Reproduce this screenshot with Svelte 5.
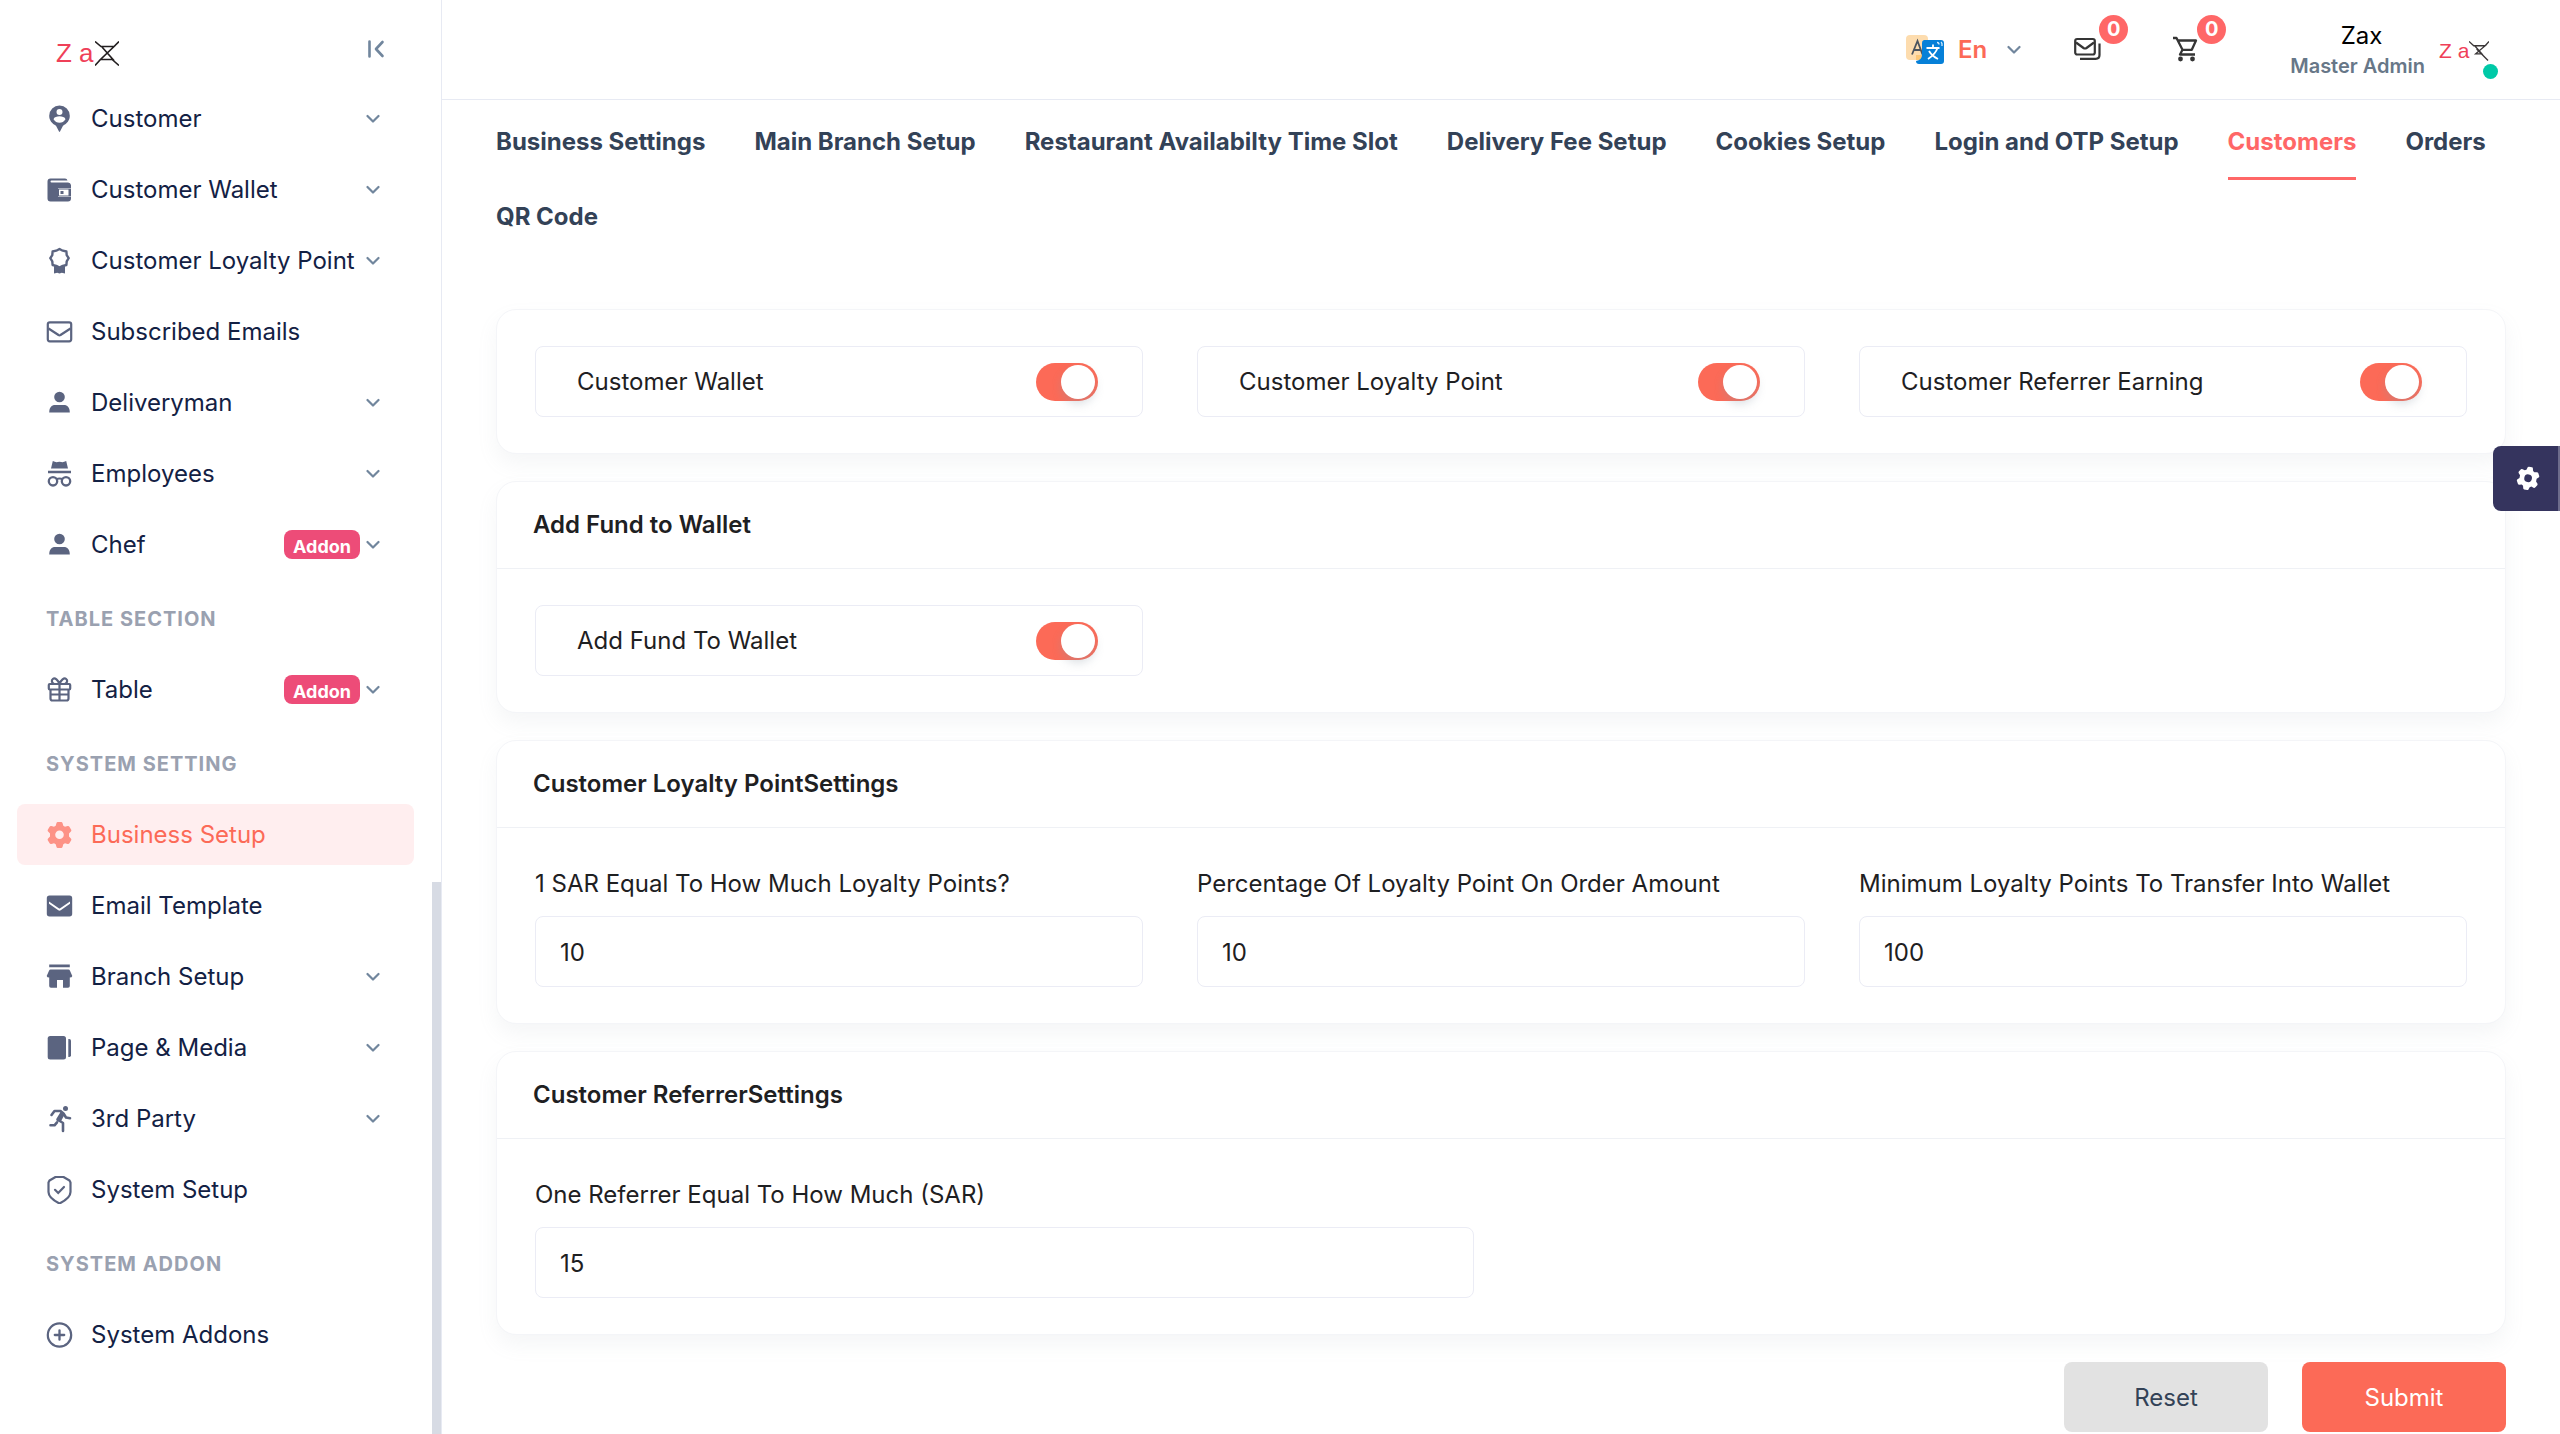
<script>
  const icons = {
    pin: '<path fill-rule="evenodd" d="M13.500 0.500a10.300 10.300 0 0 1 10.300 10.300c0 4.500-2.800 8-6.800 9.900l-3 5.800q-.5 .9-1 0l-3-5.800c-4-1.900-6.800-5.400-6.800-9.900a10.300 10.300 0 0 1 10.300-10.300zM13.500 4a3 3 0 1 0 0 6 3 3 0 0 0 0-6zM7.500 14.200c1.500 2.400 3.500 3.500 6 3.500s4.500-1.100 6-3.500c-.5-2-3.500-2.900-6-2.900s-5.500 .9-6 2.900z"/>',
    wallet: '<path d="M4.500 2.500H19a2.500 2.500 0 0 1 2.500 2H5.500a1 1 0 0 0 0 2H22a3 3 0 0 1 3 2.500v3h-13v9h13v1.500a3 3 0 0 1-3 3H4.500a3 3 0 0 1-3-3v-17a3 3 0 0 1 3-3z"/><path fill-rule="evenodd" d="M12 12.500h13v8H12zM13 13.500v6h9.500v-6z"/><rect x="14.500" y="15" width="3" height="3"/>',
    ribbon: '<path fill="none" stroke="currentColor" stroke-width="2.400" stroke-linejoin="round" d="M13.500 2l3.300 1.700 3.600.8.300 3.700 2 3-2 3.100-.3 3.700-3.600.8-3.300 1.700-3.300-1.700-3.600-.8-.3-3.700-2-3.100 2-3 .3-3.700 3.600-.8z"/><path d="M8 18.500l5.500 2.200 5.500-2.200v8l-3.200-.8-2.300.8-2.300-.8-3.200.8z"/>',
    mail: '<rect x="1.800" y="4.300" width="23.400" height="19" rx="2" fill="none" stroke="currentColor" stroke-width="2.200"/><path fill="none" stroke="currentColor" stroke-width="2.200" d="M2.500 10.500l10 6.500q1 .6 2 0l10-6.500"/>',
    person: '<circle cx="13.500" cy="8" r="5.300"/><path d="M3.200 23.500c0-5 2.300-7.500 6-7.500h8.600c3.700 0 6 2.500 6 7.500z"/>',
    incognito: '<path d="M5 8.500L6.800 1q3 1.600 5 1 1.700-.6 3.400 0 2 .6 5-1L22 8.500zM2 10.800h23v2.400H2z"/><circle cx="7" cy="21.300" r="4.200" fill="none" stroke="currentColor" stroke-width="2.300"/><circle cx="20" cy="21.300" r="4.200" fill="none" stroke="currentColor" stroke-width="2.300"/><path fill="none" stroke="currentColor" stroke-width="2" d="M10 19.300q3.500-1.500 7 0"/>',
    gift: '<g fill="none" stroke="currentColor" stroke-width="2.200" stroke-linejoin="round"><rect x="2.800" y="8" width="21.400" height="5.500" rx="1"/><path d="M4.500 13.500v9q0 2 2 2h14q2 0 2-2v-9M13.500 8v16.500M5 18.500h17"/><path d="M13.500 8C12 4 9 1.500 7 2.800 4.800 4.300 6 7 8 8M13.500 8C15 4 18 1.500 20 2.800 22.200 4.300 21 7 19 8"/></g>',
    gear: '<path fill-rule="evenodd" d="M11.800 1h3.400q1 0 1.300 1l.8 2.800 1.700 1 2.600-.7q1.200-.3 1.800.6l1.800 3q.5 1-.3 1.800L23 12.500v3l1.900 2q.8.800.3 1.800l-1.800 3q-.6.900-1.800.6l-2.600-.7-1.700 1-.8 2.800q-.3 1-1.300 1h-3.400q-1 0-1.300-1l-.8-2.800-1.700-1-2.600.7q-1.200.3-1.800-.6l-1.800-3q-.5-1 .3-1.800l1.900-2v-3l-1.900-2q-.8-.8-.3-1.800l1.800-3q.6-.9 1.800-.6l2.600.7 1.700-1 .8-2.800q.3-1 1.300-1zM13.500 9.500a4.300 4.300 0 1 0 0 8.600 4.300 4.300 0 0 0 0-8.600z"/>',
    mailFill: '<path fill-rule="evenodd" d="M3.500 3.500h20a2.700 2.700 0 0 1 2.700 2.700v15.600a2.700 2.700 0 0 1-2.700 2.700h-20a2.700 2.700 0 0 1-2.700-2.700V6.200a2.700 2.700 0 0 1 2.700-2.700zM3 9.500v2.300l9.300 6.500q1.200.7 2.400 0l9.300-6.500V9.500l-9.800 6.700q-.7.400-1.400 0z"/>',
    store: '<path d="M3.200 1.500h20.600v2.800H3.200zM4.500 6.500h18q1 0 1.500 1.200l2.300 5.300q-.3 1.500-2.500 1.600V23q0 1.800-1.800 1.800h-5V17H11v7.800H5q-1.800 0-1.800-1.800v-8.400Q1 14.500.7 13L3 7.700Q3.500 6.500 4.500 6.500z"/>',
    page: '<rect x="1.700" y="2" width="18.300" height="23.500" rx="2.500"/><path d="M22.300 5h1a1.700 1.700 0 0 1 1.700 1.700v14.500a1.700 1.700 0 0 1-1.700 1.700h-1z"/>',
    runner: '<circle cx="19.500" cy="3.500" r="2.500"/><path d="M10 5.500l6 .8-5.500 9.500 4 1.200 4.500-8z"/><g fill="none" stroke="currentColor" stroke-width="2.600" stroke-linecap="round" stroke-linejoin="round"><path d="M5.500 10l3-4h6l3 2.500 2.500 4 4 .8M15.500 8l-4 6.500 5.500 3.500v8M4.500 20.300h4l2.500-3"/></g>',
    shield: '<path fill="none" stroke="currentColor" stroke-width="2.200" stroke-linejoin="round" d="M9.500 1h8l6 3.500 1 2v9.500c0 4-3 7.500-11 11.500-8-4-11-7.500-11-11.500V6.500l1-2z"/><path fill="none" stroke="currentColor" stroke-width="2.200" stroke-linecap="round" d="M9 13.800l3.200 3.200 5.800-6"/>',
    plus: '<circle cx="13.500" cy="14" r="11.700" fill="none" stroke="currentColor" stroke-width="2.200"/><path fill="none" stroke="currentColor" stroke-width="2.300" stroke-linecap="round" d="M13.500 9.300v9.400M8.800 14h9.400"/>'
  };

  const sections = [
    {
      title: '',
      items: [
        { label: 'Customer', icon: 'pin', more: true },
        { label: 'Customer Wallet', icon: 'wallet', more: true },
        { label: 'Customer Loyalty Point', icon: 'ribbon', more: true },
        { label: 'Subscribed Emails', icon: 'mail' },
        { label: 'Deliveryman', icon: 'person', more: true },
        { label: 'Employees', icon: 'incognito', more: true },
        { label: 'Chef', icon: 'person', more: true, addon: true }
      ]
    },
    { title: 'TABLE SECTION', items: [{ label: 'Table', icon: 'gift', more: true, addon: true }] },
    {
      title: 'SYSTEM SETTING',
      items: [
        { label: 'Business Setup', icon: 'gear', active: true },
        { label: 'Email Template', icon: 'mailFill' },
        { label: 'Branch Setup', icon: 'store', more: true },
        { label: 'Page & Media', icon: 'page', more: true },
        { label: '3rd Party', icon: 'runner', more: true },
        { label: 'System Setup', icon: 'shield' }
      ]
    },
    { title: 'SYSTEM ADDON', items: [{ label: 'System Addons', icon: 'plus' }] }
  ];

  const tabs = [
    'Business Settings',
    'Main Branch Setup',
    'Restaurant Availabilty Time Slot',
    'Delivery Fee Setup',
    'Cookies Setup',
    'Login and OTP Setup',
    'Customers',
    'Orders',
    'QR Code'
  ];
  const currentTab = 'Customers';

  let features = $state([
    { label: 'Customer Wallet', on: true },
    { label: 'Customer Loyalty Point', on: true },
    { label: 'Customer Referrer Earning', on: true }
  ]);
  let addFund = $state(true);

  let loyalty = $state([
    { id: 'sar-points', label: '1 SAR Equal To How Much Loyalty Points?', value: '10' },
    { id: 'order-percent', label: 'Percentage Of Loyalty Point On Order Amount', value: '10' },
    { id: 'min-points', label: 'Minimum Loyalty Points To Transfer Into Wallet', value: '100' }
  ]);
  let referrer = $state('15');
</script>

{#snippet chevron()}
  <svg class="chevron" viewBox="0 0 14 14" aria-hidden="true">
    <path d="M1.500 4l5.500 5.500L12.500 4" fill="none" stroke="currentColor" stroke-width="2.200" stroke-linecap="round" stroke-linejoin="round" />
  </svg>
{/snippet}

{#snippet mark()}
  <svg class="mark" viewBox="0 0 24 25" aria-hidden="true">
    <g fill="none" stroke="#231f20" stroke-width="1.600">
      <path d="M0 .5l6 5h13L5.500 18.500H18L7 6M5.500 18.500L0 24.500M19 5.500L24 .5M16 17.500L24 24.500" />
    </g>
  </svg>
{/snippet}

<div class="app">
  <aside class="sidebar">
    <div class="brand">
      <a class="logo" href="#home"><span>Z a</span>{@render mark()}</a>
      <button class="collapse" type="button" aria-label="Collapse menu">
        <svg viewBox="0 0 18 18" aria-hidden="true">
          <path d="M2.500 1.500v15M15.500 2L9 9l6.500 7" fill="none" stroke="currentColor" stroke-width="2.600" stroke-linecap="round" stroke-linejoin="round" />
        </svg>
      </button>
    </div>
    <nav class="menu" aria-label="Main">
      {#each sections as section}
        {#if section.title}
          <h2 class="heading">{section.title}</h2>
        {/if}
        {#each section.items as item}
          <a class="item" class:active={item.active} href="#{item.icon}">
            <svg class="icon" viewBox="0 0 28 28" fill="currentColor" aria-hidden="true">{@html icons[item.icon]}</svg>
            <span class="label">{item.label}</span>
            {#if item.addon}<span class="addon">Addon</span>{/if}
            {#if item.more}{@render chevron()}{/if}
          </a>
        {/each}
      {/each}
    </nav>
    <div class="thumb"></div>
  </aside>

  <div class="page">
    <header class="topbar">
      <button class="lang" type="button">
        <svg class="flag" viewBox="0 0 38 30" aria-hidden="true">
          <rect x="0" y="0" width="22" height="25" rx="4" fill="#fddcae" />
          <path d="M10 20h8v5h-8z" fill="#fbc677" />
          <path d="M6 19.500L11.500 6l5 13.500M8 15h7" fill="none" stroke="#4b545f" stroke-width="1.800" />
          <path d="M18 5h17a3 3 0 0 1 3 3v18a3 3 0 0 1-3 3H13a3 3 0 0 1-3-3q6-1 6-6V8a3 3 0 0 1 2-3z" fill="#0680d8" />
          <path d="M20.500 13h13M27 9.500V13M31.500 13q-2 6-9.500 11M23 16q3 5 9 8" fill="none" stroke="#fff" stroke-width="1.800" />
          <path d="M31 7.500q2 0 2 2M35 7q1.500 1 1 4" fill="none" stroke="#d9ecfb" stroke-width="1.300" />
        </svg>
        <span>En</span>
        {@render chevron()}
      </button>
      <a class="alert" href="#messages" aria-label="Messages">
        <svg viewBox="0 0 28 28" aria-hidden="true">
          <g fill="none" stroke="#353535" stroke-width="2.200" stroke-linejoin="round">
            <rect x="2.200" y="4" width="19.600" height="15.500" rx="2" />
            <path d="M3 7.500l7.500 5.500q1.500 1 3 0L21 7.500M26.500 8.500V20q0 3.800-3.800 3.800H7" />
          </g>
        </svg>
        <span class="count">0</span>
      </a>
      <a class="alert" href="#orders" aria-label="Orders">
        <svg viewBox="0 0 28 28" aria-hidden="true">
          <path d="M2 3h3.500l6 11.800h9.300L25 5.500H7M11.500 14.800L9 19.500h15" fill="none" stroke="#353535" stroke-width="2.300" stroke-linejoin="round" />
          <circle cx="9.500" cy="24" r="2.400" fill="#353535" />
          <circle cx="21.500" cy="24" r="2.400" fill="#353535" />
        </svg>
        <span class="count">0</span>
      </a>
      <a class="profile" href="#profile">
        <span class="who">
          <span class="name">Zax</span>
          <span class="role">Master Admin</span>
        </span>
        <span class="avatar"><span>Z a</span>
          <svg class="mark" viewBox="0 0 21 21" aria-hidden="true">
            <path d="M0 .5l5 4.500h12L7 13.500h6.500L6 5M17 5l4-4.500M8 8.500L20 20.500" fill="none" stroke="#3a3637" stroke-width="1.400" />
          </svg>
          <i class="online"></i>
        </span>
      </a>
    </header>

    <main class="content">
      <nav class="tabs" aria-label="Business setup">
        {#each tabs as tab}
          <a href="#tab" class:current={tab === currentTab}>{tab}</a>
        {/each}
      </nav>

      <form class="cards" onsubmit={(e) => e.preventDefault()}>
        <section class="card">
          <div class="body thirds">
            {#each features as feature}
              <label class="switch">
                <span>{feature.label}</span>
                <input type="checkbox" role="switch" bind:checked={feature.on} />
              </label>
            {/each}
          </div>
        </section>

        <section class="card">
          <h3>Add Fund to Wallet</h3>
          <div class="body thirds">
            <label class="switch">
              <span>Add Fund To Wallet</span>
              <input type="checkbox" role="switch" bind:checked={addFund} />
            </label>
          </div>
        </section>

        <section class="card">
          <h3>Customer Loyalty PointSettings</h3>
          <div class="body thirds">
            {#each loyalty as field}
              <div class="field">
                <label for={field.id}>{field.label}</label>
                <input id={field.id} type="text" bind:value={field.value} />
              </div>
            {/each}
          </div>
        </section>

        <section class="card">
          <h3>Customer ReferrerSettings</h3>
          <div class="body halves">
            <div class="field">
              <label for="referrer">One Referrer Equal To How Much (SAR)</label>
              <input id="referrer" type="text" bind:value={referrer} />
            </div>
          </div>
        </section>

        <div class="actions">
          <button class="reset" type="reset">Reset</button>
          <button class="submit" type="submit">Submit</button>
        </div>
      </form>
    </main>
  </div>

  <button class="settings" type="button" aria-label="Layout settings">
    <svg viewBox="0 0 28 28" fill="currentColor" aria-hidden="true">
      <g transform="rotate(12 14 14)">{@html icons.gear}</g>
    </svg>
  </button>
</div>

<style>
  :global(body) {
    background: #fff;
    overflow-x: hidden;
  }
  .app {
    display: flex;
    min-height: 100vh;
    font-family: Inter, "Liberation Sans", sans-serif;
    font-size: 24px;
    line-height: 36px;
    color: #1e2022;
  }
  .app :where(*) {
    box-sizing: border-box;
  }
  a {
    color: inherit;
    text-decoration: none;
  }
  button {
    font: inherit;
    border: 0;
    padding: 0;
    background: none;
    cursor: pointer;
  }
  svg {
    display: block;
    flex: none;
  }

  .sidebar {
    position: sticky;
    top: 0;
    flex: none;
    width: 442px;
    height: 100vh;
    overflow: hidden;
    border-right: 1px solid #e7eaf3;
    background: #fff;
  }
  .brand {
    display: flex;
    justify-content: space-between;
    align-items: center;
    height: 88px;
    padding: 18px 56px 0 56px;
  }
  .logo,
  .avatar {
    display: flex;
    align-items: center;
    font-family: "Liberation Sans", sans-serif;
    color: #ef4058;
  }
  .logo {
    gap: 1px;
    font-size: 26px;
  }
  .logo .mark {
    width: 24px;
    height: 25px;
  }
  .collapse {
    color: #71869d;
    margin-bottom: 8px;
  }
  .collapse svg {
    width: 18px;
    height: 18px;
  }
  .menu {
    display: flex;
    flex-direction: column;
    gap: 10px;
    padding: 0 27px 0 17px;
  }
  .item {
    display: flex;
    align-items: center;
    height: 61px;
    padding: 0 34px 0 29px;
    border-radius: 8px;
    color: #132144;
  }
  .icon {
    width: 28px;
    height: 28px;
    color: #5b6480;
  }
  .label {
    flex: 1;
    padding-top: 1px;
    margin-left: 17px;
    white-space: nowrap;
  }
  .active {
    background: #ffeeef;
    color: #fc6a57;
  }
  .active .icon {
    color: #fd9286;
  }
  .chevron {
    width: 14px;
    height: 14px;
    color: #71869d;
  }
  .addon {
    height: 29px;
    margin-right: 6px;
    padding: 3px 9px 0;
    border-radius: 8px;
    background: #ed4c78;
    color: #fff;
    font-size: 18px;
    font-weight: 700;
    line-height: 28px;
  }
  .heading {
    display: flex;
    align-items: center;
    height: 61px;
    margin: 3px 0 0;
    padding-left: 29px;
    font-size: 20px;
    font-weight: 700;
    letter-spacing: 1px;
    color: #9aa1b0;
  }
  .thumb {
    position: absolute;
    right: 0;
    bottom: 0;
    width: 9px;
    height: 552px;
    background: #d7dbe4;
  }

  .page {
    flex: 1;
    min-width: 0;
  }
  .topbar {
    display: flex;
    justify-content: flex-end;
    align-items: center;
    gap: 42px;
    height: 100px;
    padding-right: 62px;
    border-bottom: 1px solid #e7eaf3;
  }
  .lang {
    display: flex;
    align-items: center;
    gap: 14px;
    margin-right: -4px;
    color: #fc6a57;
    font-weight: 600;
  }
  .lang .chevron {
    margin-left: 6px;
  }
  .flag {
    width: 38px;
    height: 30px;
  }
  .alert {
    position: relative;
    width: 56px;
    padding: 12px 14px 14px;
  }
  .alert svg {
    width: 28px;
    height: 28px;
  }
  .count {
    position: absolute;
    top: -8px;
    right: -13px;
    width: 29px;
    height: 29px;
    border-radius: 50%;
    background: #ff6767;
    color: #fff;
    font-size: 20px;
    font-weight: 700;
    line-height: 29px;
    text-align: center;
  }
  .profile {
    display: flex;
    align-items: center;
    gap: 14px;
    margin-left: 35px;
  }
  .who {
    display: flex;
    flex-direction: column;
    text-align: center;
  }
  .name {
    padding: 2px 0 0 8px;
    color: #000;
    line-height: 30px;
  }
  .role {
    font-size: 20px;
    font-weight: 600;
    line-height: 30px;
    color: #677788;
  }
  .avatar {
    position: relative;
    width: 59px;
    margin-top: 2px;
    font-size: 21px;
  }
  .avatar > span {
    white-space: nowrap;
  }
  .avatar .mark {
    width: 20px;
    height: 20px;
  }
  .online {
    position: absolute;
    right: 0;
    bottom: -10px;
    width: 15px;
    height: 15px;
    border-radius: 50%;
    background: #00c9a7;
  }

  .content {
    padding: 5px 54px 2px;
  }
  .tabs {
    display: flex;
    flex-wrap: wrap;
    column-gap: 49px;
    margin-bottom: 54px;
    font-weight: 700;
    color: #334257;
  }
  .tabs a {
    height: 75px;
    padding-top: 19px;
    border-bottom: 3px solid transparent;
  }
  .tabs .current {
    color: #ff6767;
    border-bottom-color: #ff6767;
  }
  .cards {
    display: flex;
    flex-direction: column;
    gap: 27px;
  }
  .card {
    border: 1px solid #f4f5f8;
    border-radius: 20px;
    background: #fff;
    box-shadow: 0 10px 20px rgba(140, 152, 164, 0.09);
  }
  .card h3 {
    margin: 0;
    padding: 25px 36px;
    border-bottom: 1px solid #eff1f5;
    font-size: 24px;
    font-weight: 600;
  }
  .body {
    display: grid;
    gap: 54px;
    padding: 36px 38px;
  }
  .thirds {
    grid-template-columns: repeat(3, 1fr);
  }
  .halves {
    grid-template-columns: repeat(2, 1fr);
  }
  .switch {
    display: flex;
    justify-content: space-between;
    align-items: center;
    height: 71px;
    padding: 1px 44px 0 41px;
    border: 1px solid #ebecf5;
    border-radius: 8px;
  }
  .switch input {
    appearance: none;
    flex: none;
    display: flex;
    width: 62px;
    height: 38px;
    margin: 0;
    padding: 2px 3px;
    border-radius: 19px;
    background: #e7eaf3;
    cursor: pointer;
  }
  .switch input::before {
    content: "";
    width: 34px;
    height: 34px;
    border-radius: 50%;
    background: #fff;
    box-shadow: 0 5px 10px rgba(140, 152, 164, 0.3);
  }
  .switch input:checked {
    justify-content: flex-end;
    background: #fc6a57;
  }
  .field label {
    display: block;
    padding-top: 2px;
    margin-bottom: 14px;
    white-space: nowrap;
  }
  .field input {
    display: block;
    width: 100%;
    height: 71px;
    padding: 2px 24px 0;
    border: 1px solid #ebecf5;
    border-radius: 8px;
    background: #fff;
    color: inherit;
    font: inherit;
  }
  .actions {
    display: flex;
    justify-content: flex-end;
    gap: 34px;
  }
  .actions button {
    width: 204px;
    height: 70px;
    padding-top: 2px;
    border-radius: 8px;
  }
  .reset {
    background: #e2e2e2;
    color: #334257;
  }
  .submit {
    background: #fc6a57;
    color: #fff;
  }
  .settings {
    position: fixed;
    top: 446px;
    right: 0;
    display: flex;
    align-items: center;
    width: 67px;
    height: 65px;
    padding-left: 23px;
    border-right: 2px solid #6d6c8b;
    border-radius: 8px 0 0 8px;
    background: #35345e;
    color: #fff;
  }
  .settings svg {
    width: 25px;
    height: 25px;
  }
</style>
